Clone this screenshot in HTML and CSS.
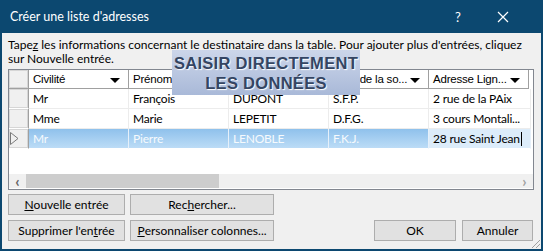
FILE: index.html
```html
<!DOCTYPE html>
<html lang="fr">
<head>
    <meta charset="UTF-8">
    <title>Créer une liste d'adresses</title>
    <link rel="stylesheet" href="styles.css">
</head>
<body>
    <div class="window">
        <div class="titlebar">
            <span class="title">Créer une liste d'adresses</span>
            <span class="help">?</span>
            <span class="close">
                <svg width="12" height="12" viewBox="0 0 12 12"><path d="M1 1L11 11M11 1L1 11" stroke="#fff" stroke-width="1.2"/></svg>
            </span>
        </div>
        <div class="content">
            <p class="intro">Tape<u>z</u> les informations concernant le destinataire dans la table. Pour ajouter plus d'entrées, cliquez sur Nouvelle entrée.</p>
            <div class="grid">
                <div class="row head">
                    <div class="rh"></div>
                    <div class="hc">Civilité<span class="dd"></span></div>
                    <div class="hc">Prénom<span class="dd"></span></div>
                    <div class="hc">Nom<span class="dd"></span></div>
                    <div class="hc">Nom de la so...<span class="dd"></span></div>
                    <div class="hc">Adresse Lign...<span class="dd"></span></div>
                </div>
                <div class="row">
                    <div class="rh"></div>
                    <div class="c">Mr</div>
                    <div class="c">François</div>
                    <div class="c">DUPONT</div>
                    <div class="c">S.F.P.</div>
                    <div class="c">2 rue de la PAix</div>
                </div>
                <div class="row">
                    <div class="rh"></div>
                    <div class="c">Mme</div>
                    <div class="c">Marie</div>
                    <div class="c">LEPETIT</div>
                    <div class="c">D.F.G.</div>
                    <div class="c">3 cours Montali...</div>
                </div>
                <div class="row sel">
                    <div class="rh">
                        <svg width="9" height="13" viewBox="0 0 9 13"><path d="M0.5 0.5L8 6.5L0.5 12.5Z" fill="none" stroke="#7a7a7a"/></svg>
                    </div>
                    <div class="c">Mr</div>
                    <div class="c">Pierre</div>
                    <div class="c">LENOBLE</div>
                    <div class="c">F.K.J.</div>
                    <div class="c cur">28 rue Saint Jean<span class="caret"></span></div>
                </div>
                <div class="empty"></div>
                <div class="hscroll">
                    <span class="arrow">&lsaquo;</span>
                    <span class="thumb"></span>
                    <span class="track"></span>
                    <span class="arrow">&rsaquo;</span>
                </div>
            </div>
            <div class="footer">
                <div class="btncol">
                    <div class="btn w1"><u>N</u>ouvelle entrée</div>
                    <div class="btn w1">Supprimer l'en<u>t</u>rée</div>
                </div>
                <div class="btncol">
                    <div class="btn w2">Rec<u>h</u>ercher...</div>
                    <div class="btn w2"><u>P</u>ersonnaliser colonnes...</div>
                </div>
                <div class="actions">
                    <div class="btn ok">OK</div>
                    <div class="btn cancel">Annuler</div>
                </div>
            </div>
            <div class="note">SAISIR DIRECTEMENT<br>LES DONNÉES</div>
        </div>
        <div class="grip"></div>
    </div>
</body>
</html>
```

FILE: styles.css
```css
body {
    margin: 0;
    background-color: #ffffff;
}
.window {
    width: 543px;
    height: 251px;
    box-sizing: border-box;
    border: 2px solid #0c4870;
    border-top: none;
    background-color: #f0f0f0;
    display: flex;
    flex-direction: column;
    position: relative;
    font-family: Lato, "Noto Sans", sans-serif;
}
.titlebar {
    height: 33px;
    background-color: #0c4870;
    color: #ffffff;
    display: flex;
    align-items: center;
    margin: 0 -2px;
    padding: 0 12px 0 10px;
    font-size: 12.5px;
}
.title {
    flex: 1;
}
.help {
    width: 16px;
    margin-right: 26px;
    font-size: 13px;
}
.close {
    display: flex;
    margin-right: 22px;
}
.content {
    flex: 1;
    padding: 5px 6px 0 6px;
    position: relative;
}
.intro {
    margin: 0 0 3px 0;
    font-size: 12px;
    line-height: 14px;
    color: #000000;
}
.grid {
    height: 119px;
    border: 1px solid #828790;
    background-color: #ffffff;
    display: flex;
    flex-direction: column;
    width: 524px;
}
.row {
    display: flex;
    height: 20px;
    font-size: 12px;
    letter-spacing: -0.2px;
}
.row.head {
    height: 19px;
    font-family: "Liberation Sans", Arial, sans-serif;
    font-size: 11.5px;
    letter-spacing: -0.2px;
}
.rh {
    width: 18px;
    flex: none;
    background-color: #f0f0f0;
    border-right: 1px solid #a0a0a0;
    border-bottom: 1px solid #ffffff;
    box-shadow: inset 0 0 0 1px #d6d6d6;
    display: flex;
    align-items: center;
    padding-left: 1px;
}
.head .rh {
    border-bottom: 1px solid #a0a0a0;
}
.hc {
    flex: none;
    border-right: 1px solid #a0a0a0;
    border-bottom: 1px solid #a0a0a0;
    padding-left: 4px;
    box-sizing: border-box;
    width: 100px;
    display: flex;
    align-items: center;
    position: relative;
    color: #000000;
}
.dd {
    position: absolute;
    right: 8px;
    top: 8px;
    border-left: 5px solid transparent;
    border-right: 5px solid transparent;
    border-top: 5px solid #000000;
}
.c {
    width: 100px;
    flex: none;
    box-sizing: border-box;
    border-right: 1px solid #ececec;
    border-bottom: 1px solid #ececec;
    padding-left: 4px;
    display: flex;
    align-items: center;
    white-space: nowrap;
    overflow: hidden;
    color: #000000;
}
.c:last-child {
    width: 102px;
}
.sel .c {
    background: linear-gradient(#8fc1ec, #bcdcf6);
    color: #f6fafd;
    border-right-color: #e6f0fa;
    border-bottom-color: #ffffff;
}
.sel .c.cur {
    background: #dcecfa;
    color: #000000;
}
.caret {
    width: 1px;
    height: 14px;
    background-color: #000000;
    margin-left: 1px;
}
.empty {
    flex: 1;
}
.hscroll {
    height: 14px;
    display: flex;
    align-items: center;
    background-color: #f0f0f0;
    margin-bottom: 1px;
}
.arrow {
    width: 17px;
    text-align: center;
    font-size: 15px;
    line-height: 14px;
    color: #606060;
    font-weight: bold;
}
.arrow:last-child {
    color: #a0a0a0;
}
.thumb {
    width: 193px;
    height: 14px;
    background-color: #cdcdcd;
}
.track {
    flex: 1;
}
.footer {
    display: flex;
    margin-top: 4px;
    font-size: 12px;
}
.btncol {
    display: flex;
    flex-direction: column;
    gap: 5px;
    margin-right: 5px;
}
.btn {
    height: 21px;
    box-sizing: border-box;
    border: 1px solid #adadad;
    background-color: #e1e1e1;
    display: flex;
    align-items: center;
    justify-content: center;
    color: #000000;
}
.w1 {
    width: 117px;
}
.w2 {
    width: 144px;
}
.actions {
    margin-left: auto;
    margin-right: 2px;
    display: flex;
    align-items: flex-end;
    gap: 6px;
}
.ok {
    width: 82px;
}
.cancel {
    width: 71px;
}
.note {
    position: absolute;
    left: 170px;
    top: 17px;
    width: 188px;
    height: 45px;
    background: linear-gradient(#ccd6ea, #a9b9d8);
    color: #344563;
    font-family: "Liberation Sans", Arial, sans-serif;
    font-weight: bold;
    font-size: 16.5px;
    line-height: 20px;
    text-align: center;
    display: flex;
    align-items: center;
    justify-content: center;
    text-shadow: 1px 1px 1px #ffffff;
    letter-spacing: 0.3px;
}
.grip {
    position: absolute;
    right: 1px;
    bottom: 1px;
    width: 10px;
    height: 10px;
    background: repeating-linear-gradient(135deg, transparent 0 2px, #a0a0a0 2px 3px);
    clip-path: polygon(100% 0, 100% 100%, 0 100%);
}
```
